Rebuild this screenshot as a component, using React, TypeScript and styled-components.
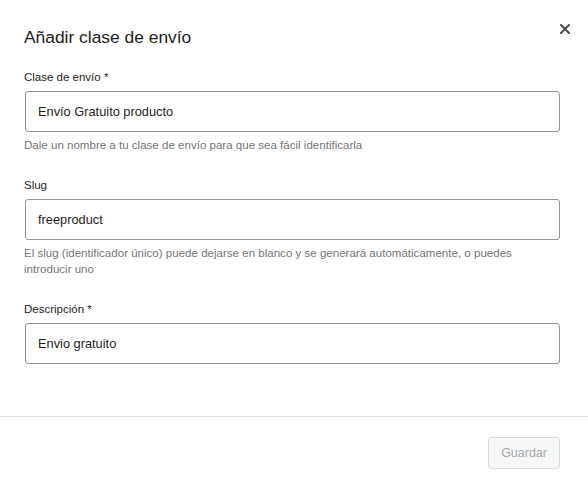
import React from "react";
import styled, { createGlobalStyle } from "styled-components";

const Global = createGlobalStyle`
  html, body { margin: 0; padding: 0; background: #fff; }
  body { font-family: "Liberation Sans", Arial, sans-serif; color: #1e1e1e; }
  * { box-sizing: border-box; }
`;

const Modal = styled.div`
  width: 588px;
  height: 478px;
  background: #fff;
  display: flex;
  flex-direction: column;
`;

const Header = styled.div`
  display: flex;
  align-items: flex-start;
  justify-content: space-between;
  padding: 24px 18px 0 24px;
`;

const Title = styled.h1`
  margin: 0;
  font-size: 17.4px;
  line-height: 26px;
  font-weight: 400;
  color: #1e1e1e;
`;

const CloseButton = styled.button`
  border: 0;
  background: none;
  padding: 0;
  width: 10px;
  height: 10px;
  display: flex;
  cursor: pointer;
`;

const Body = styled.div`
  display: flex;
  flex-direction: column;
  gap: 24px;
  padding: 19px 28px 52px 24px;
`;

const Field = styled.div`
  display: flex;
  flex-direction: column;
`;

const Label = styled.label`
  font-size: 11.5px;
  line-height: 16px;
  color: #1e1e1e;
  margin-bottom: 6px;
`;

const Input = styled.input`
  width: calc(100% - 1px);
  margin-left: 1px;
  height: 41px;
  border: 1px solid #949494;
  border-radius: 3px;
  padding: 0 12px;
  font-family: inherit;
  font-size: 12.8px;
  color: #1e1e1e;
  outline: none;
`;

const Help = styled.p`
  margin: 5px 0 0;
  font-size: 11.55px;
  line-height: 16px;
  color: #757575;
`;

const Footer = styled.div`
  border-top: 1px solid #e0e0e0;
  display: flex;
  justify-content: flex-end;
  padding: 20px 28px 0 24px;
`;

const SaveButton = styled.button`
  height: 32px;
  padding: 0 12px;
  border: 1px solid #dcdcde;
  border-radius: 3px;
  background: #f6f7f7;
  color: #a7aaad;
  font-family: inherit;
  font-size: 12.5px;
`;

export default function App() {
  return (
    <>
      <Global />
      <Modal>
        <Header>
          <Title>Añadir clase de envío</Title>
          <CloseButton aria-label="Cerrar">
            <svg width="10" height="10" viewBox="0 0 10 10">
              <path d="M1 1 L9 9 M9 1 L1 9" stroke="#4a4a4a" strokeWidth="2" strokeLinecap="square" />
            </svg>
          </CloseButton>
        </Header>
        <Body>
          <Field>
            <Label>Clase de envío *</Label>
            <Input defaultValue="Envío Gratuito producto" />
            <Help>Dale un nombre a tu clase de envío para que sea fácil identificarla</Help>
          </Field>
          <Field>
            <Label>Slug</Label>
            <Input defaultValue="freeproduct" />
            <Help>
              El slug (identificador único) puede dejarse en blanco y se generará automáticamente, o puedes introducir uno
            </Help>
          </Field>
          <Field>
            <Label>Descripción *</Label>
            <Input defaultValue="Envio gratuito" />
          </Field>
        </Body>
        <Footer>
          <SaveButton disabled>Guardar</SaveButton>
        </Footer>
      </Modal>
    </>
  );
}
